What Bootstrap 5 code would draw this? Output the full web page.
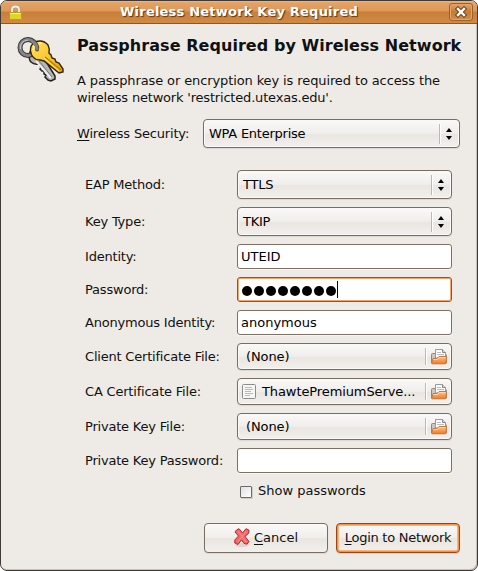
<!DOCTYPE html>
<html lang="en">
<head>
<meta charset="utf-8">
<meta name="viewport" content="width=device-width, initial-scale=1">
<title>Wireless Network Key Required</title>
<link href="https://cdn.jsdelivr.net/npm/bootstrap@5.3.0/dist/css/bootstrap.min.css" rel="stylesheet">
<style>
html,body{height:571px;overflow:hidden;background:#fff}
body{font-family:"DejaVu Sans",sans-serif;font-size:13px;line-height:17px;color:#111;margin:0}
.dialog-window{width:478px;height:571px;background:#eeebe6;border:1px solid #403a36;border-radius:7px;overflow:hidden;box-shadow:inset -1px -1px #c4c0bb}
.titlebar{height:23px;margin:0;background:linear-gradient(#f1b77c 0,#e3a164 2px,#dc9959 10px,#c87f38 11px,#d18a45 22px);border-bottom:1px solid #8b5928;padding:0 4px 0 8px}
.titlebar h1{font-size:13px;line-height:22px;font-weight:700;letter-spacing:.21px;color:#fff;text-shadow:1px 1px 1px #593615;margin:0;padding-left:7px;text-align:center}
.close-btn{width:24px;height:18px;padding:0;border:1px solid #9b6229;border-radius:3px;background:linear-gradient(#e0a469,#c47b35 50%,#d18d4a);box-shadow:inset 0 0 0 1px #dfa36b;line-height:0}
.dialog-content{padding:13px 17px 0 16px}
.key-art{width:60px;flex:none}
.intro h2{font-size:16px;line-height:17px;font-weight:700;letter-spacing:.05px;margin:0;white-space:nowrap}
.intro p{margin:18px 0 0;white-space:nowrap;letter-spacing:-.11px}
.intro .network-line{letter-spacing:-.19px}
.security-row{margin:13px 0 0 60px;height:29px;letter-spacing:-.18px}
.security-row .combo{width:257px}
.fields{display:grid;grid-template-columns:152px 215px;row-gap:8px;margin:22px 0 0 68px;align-items:center}
.fields label{white-space:nowrap;letter-spacing:-.2px}
.combo,.filebox{height:29px;padding:0 7px 0 5px;border:1px solid #776d60;border-radius:4px;background:linear-gradient(#faf9f8,#f0eeeb 50%,#e9e5e1 51%,#f2f0ed);box-shadow:0 1px 1px #dcd8d2,inset 0 0 0 1px #faf9f7;font-size:13px;color:#000;line-height:17px;text-align:left}
.combo{letter-spacing:-.25px}
.filebox{height:27px;padding:0 4px;letter-spacing:-.1px}
.vrule{width:1px;background:#bcb8b2;box-shadow:1px 0 #fff;flex:none}
.combo .vrule{height:20px;margin-right:6px}
.filebox .vrule{height:17px;margin-right:5px}
.file-name{margin-left:6px}
.entry{height:25px;border:1px solid #807063;border-radius:3px;padding:0 3px;font-size:13px;line-height:17px;color:#000;background:#fff;box-shadow:0 1px #f8f7f5}
.entry:focus,.entry.active{border-color:#a0501f;box-shadow:inset 0 0 0 1px #f4a46b}
.dots{display:grid;grid-template-columns:repeat(8,12px);margin:3px 0 0}
.dots i{width:10.600px;height:10.600px;border-radius:50%;background:#000;margin-left:.5px}
.caret{width:1px;height:17px;background:#000}
.check-row{margin:9px 0 0 223px;height:17px}
.check-box{width:12px;height:12px;margin:2px 6px 0 0;border:1px solid #6d6b69;border-radius:1px;background:linear-gradient(135deg,#e1e1e1,#fff);box-shadow:1px 1px #d0ccc6;flex:none;appearance:none}
.actions{margin-top:24px;gap:8px}
.dialog-btn{width:124px;height:30px;padding:0 0 1px;border:1px solid #776d60;border-radius:4px;font-size:13px;line-height:17px;color:#111;background:linear-gradient(#faf9f8,#f0eeeb 50%,#e9e5e1 51%,#f2f0ed);box-shadow:0 1px 1px #dcd8d2;white-space:nowrap}
.dialog-btn.default{letter-spacing:-.25px;border:1px solid #964817;background:linear-gradient(#faf9f8,#f0eeeb 50%,#e9e5e1 51%,#f2f0ed) padding-box;box-shadow:inset 0 0 0 1px #f59147,inset 0 0 0 2px #ffb27a,0 1px 1px #d2cdc7}
svg{display:block;flex:none}
u{text-underline-offset:2px;text-decoration-thickness:1px}
</style>
<script src="https://cdn.jsdelivr.net/npm/bootstrap@5.3.0/dist/js/bootstrap.bundle.min.js"></script>
</head>
<body>
<svg width="0" height="0" class="position-absolute" aria-hidden="true">
<defs>
<linearGradient id="orange" x2="0" y2="1"><stop stop-color="#ffc58c"/><stop offset="1" stop-color="#ed7b20"/></linearGradient>
<symbol id="folder" viewBox="0 0 16 16"><path d="M.5 14V5.500q0-1 1-1h4l1 1h8q1 0 1 1V14z" fill="#cfc6bd" stroke="#8f867e"/><path d="M4.500 9V.5h7l3 3V9z" fill="#fafafa" stroke="#999"/><path d="M11.500.5v3h3" fill="#ddd" stroke="#888"/><path d="M6 3.500h4M6 5.500h7" stroke="#bbb"/><path d="M.7 14 2 9.500h4l2-2h7.500L15 14q0 .8-1 .8H1.500Q.5 14.800.7 14z" fill="url(#orange)" stroke="#c9783c"/><path d="M2.500 10.500H6.500l2-2h6" fill="none" stroke="#ffd8b2"/></symbol>
<symbol id="arrows" viewBox="0 0 6 12"><path d="M3 0 6 4H0zM0 8h6l-3 4z"/></symbol>
</defs>
</svg>
<main class="dialog-window">
<header class="titlebar d-flex align-items-center">
<svg width="13" height="15" viewBox="0 0 13 15"><path d="M3 8V4.500Q3 1.500 6.500 1.500T10 4.500V8" fill="none" stroke="#a09e96" stroke-width="3"/><path d="M3 8V4.500Q3 1.500 6.500 1.500T10 4.500V8" fill="none" stroke="#eee" stroke-width="1.800"/><path d="M.5 7.500h12v7H.5z" fill="#e2d32c" stroke="#b5a01c"/><path d="M1.500 8.500h10" stroke="#f8f392"/></svg>
<h1 class="flex-grow-1">Wireless Network Key Required</h1>
<button class="close-btn d-flex align-items-center justify-content-center" aria-label="Close"><svg width="12" height="12" viewBox="0 0 12 12"><path d="m3 3 6 6m0-6L3 9" stroke="#75441a" stroke-width="4.500" stroke-linecap="square"/><path d="m3 3 6 6m0-6L3 9" stroke="#fff" stroke-width="2.400" stroke-linecap="square"/></svg></button>
</header>
<section class="dialog-content">
<div class="d-flex intro">
<div class="key-art"><svg width="48" height="48" viewBox="0 0 48 48">
<defs><linearGradient id="gold" x2="1" y2="1"><stop stop-color="#ffe26a"/><stop offset=".5" stop-color="#fbc82c"/><stop offset="1" stop-color="#e9a000"/></linearGradient></defs>
<path d="M13 15q-2 7 1 10 3 3 8 2l2 3-1 2 2 2 2 0 0 3 2 1-1 2 3 3 3 1 4-2v-3L25 18z" fill="#b5b5b5" stroke="#222" stroke-width="1.500"/>
<path d="m19 24 15 17" stroke="#eee" stroke-width="2"/><path d="m22 24 13 16" stroke="#777"/>
<circle cx="11" cy="10.500" r="8" fill="none" stroke="#333" stroke-width="5"/><circle cx="11" cy="10.500" r="8" fill="none" stroke="#858585" stroke-width="3.200"/><path d="M3.500 12Q2.500 4 11 3" fill="none" stroke="#c5c5c5"/>
<path d="M13.500 14Q13 8 18 5q8-3 13 3 2 4 1 8l2 2 1 3 3 1 1 3 3 1 4 6 0 3-4 1L27 24l-4-1q-8 0-9.500-9z" fill="url(#gold)" stroke="#302409" stroke-width="1.400"/>
<path d="m28 20 16 13" stroke="#b87900" stroke-width="1.200"/><path d="m27 21 15 13" stroke="#ffe993"/><path d="M16 13q2-6 8-7" fill="none" stroke="#fff09b" stroke-width="2"/>
<path d="M16 4.500q5 3 4 8" fill="none" stroke="#5e4c22" stroke-width="4" stroke-linecap="round"/><path d="M15 4q5 3 5 8" fill="none" stroke="#858585" stroke-width="2.800" stroke-linecap="round"/>
</svg></div>
<div><h2>Passphrase Required by Wireless Network</h2><p>A passphrase or encryption key is required to access the<br><span class="network-line">wireless network 'restricted.utexas.edu'.</span></p></div>
</div>
<div class="security-row d-flex align-items-center justify-content-between"><label for="security"><u>W</u>ireless Security:</label><button id="security" class="combo d-flex align-items-center"><span class="flex-grow-1">WPA Enterprise</span><span class="vrule"></span><svg width="6" height="12"><use href="#arrows"/></svg></button></div>
<div class="fields">
<label for="eap">EAP Method:</label><button id="eap" class="combo d-flex align-items-center"><span class="flex-grow-1">TTLS</span><span class="vrule"></span><svg width="6" height="12"><use href="#arrows"/></svg></button>
<label for="keytype">Key Type:</label><button id="keytype" class="combo d-flex align-items-center"><span class="flex-grow-1">TKIP</span><span class="vrule"></span><svg width="6" height="12"><use href="#arrows"/></svg></button>
<label for="identity">Identity:</label><input id="identity" class="entry" value="UTEID">
<label>Password:</label><div class="entry active d-flex align-items-center"><span class="dots"><i></i><i></i><i></i><i></i><i></i><i></i><i></i><i></i></span><span class="caret"></span></div>
<label for="anon">Anonymous Identity:</label><input id="anon" class="entry" value="anonymous">
<label for="client">Client Certificate File:</label><button id="client" class="filebox d-flex align-items-center"><span class="flex-grow-1 ps-1">(None)</span><span class="vrule"></span><svg width="16" height="16"><use href="#folder"/></svg></button>
<label for="ca">CA Certificate File:</label><button id="ca" class="filebox d-flex align-items-center"><svg width="14" height="15" viewBox="0 0 14 15"><rect x=".5" y=".5" width="13" height="14" rx="1" fill="#f6f6f4" stroke="#8c8d89"/><path d="M3 3.500h7M3 5.500h8M3 7.500h6M3 9.500h8M3 11.500h5" stroke="#bbb"/></svg><span class="file-name flex-grow-1">ThawtePremiumServe...</span><span class="vrule"></span><svg width="16" height="16"><use href="#folder"/></svg></button>
<label for="private">Private Key File:</label><button id="private" class="filebox d-flex align-items-center"><span class="flex-grow-1 ps-1">(None)</span><span class="vrule"></span><svg width="16" height="16"><use href="#folder"/></svg></button>
<label for="pkpass">Private Key Password:</label><input id="pkpass" class="entry" type="password">
</div>
<div class="check-row d-flex align-items-center"><input id="show" type="checkbox" class="check-box"><label for="show">Show passwords</label></div>
<div class="actions d-flex justify-content-end">
<button class="dialog-btn d-flex align-items-center justify-content-center"><svg class="me-1" width="16" height="19" viewBox="0 0 16 19"><ellipse cx="8" cy="17" rx="7" ry="2" fill="#d9d5d1"/><path d="M2.500 2 5 .7 8.500 5 12 .7l3 1.500-.3 3L11 8.500l4 5-2 2.700-3-.8-2.500-3.500L4 16.500.8 15v-3L4.500 8 1 4z" fill="#f26a6a" stroke="#b3262c" stroke-width="1"/><path d="m4 3 8 11M12 3 4 14" stroke="#f98e8c"/></svg><span><u>C</u>ancel</span></button>
<button class="dialog-btn default d-flex align-items-center justify-content-center"><span><u>L</u>ogin to Network</span></button>
</div>
</section>
</main>
</body>
</html>
